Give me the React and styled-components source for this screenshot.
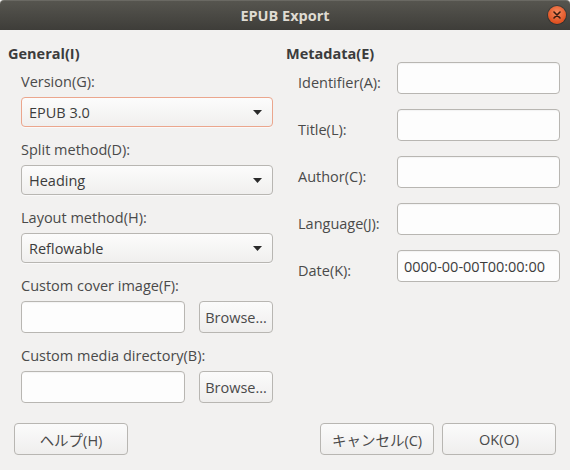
import React from "react";
import styled, { createGlobalStyle } from "styled-components";

const Global = createGlobalStyle`
  html, body { margin: 0; padding: 0; background: #f2f1f0; }
  body { font-family: "Open Sans", "Noto Sans CJK JP", sans-serif; font-size: 14.5px; color: #4a4a4a; }
  * { box-sizing: border-box; }
`;

const Window = styled.div`
  width: 570px;
  height: 470px;
  display: flex;
  flex-direction: column;
  background: #f2f1f0;
  overflow: hidden;
`;

const TitleBar = styled.div`
  position: relative;
  height: 30px;
  flex: none;
  display: flex;
  align-items: center;
  justify-content: center;
  background: linear-gradient(#56554f, #3e3d39);
  border-top: 1px solid #6a6963;
  border-radius: 4px 4px 0 0;
`;

const Title = styled.div`
  font-family: "Open Sans", sans-serif;
  font-weight: 700;
  font-size: 14.5px;
  color: #dfdbd2;
`;

const CloseBtn = styled.div`
  position: absolute;
  right: 4px;
  top: 5px;
  width: 18px;
  height: 18px;
  border-radius: 50%;
  background: radial-gradient(circle at 50% 35%, #f58a5f, #e05222 70%, #c9431a);
  box-shadow: 0 0 0 1px rgba(0,0,0,0.25);
  display: flex;
  align-items: center;
  justify-content: center;
`;

const Body = styled.div`
  flex: 1;
  display: flex;
  flex-direction: column;
  padding: 15px 14px 15px 8px;
`;

const Columns = styled.div`
  display: grid;
  grid-template-columns: 265px 274px;
  column-gap: 13px;
`;

const Column = styled.div`
  display: flex;
  flex-direction: column;
`;

const Heading = styled.div`
  font-weight: 700;
  line-height: 17px;
  color: #3c3c3c;
`;

const FieldList = styled.div`
  display: flex;
  flex-direction: column;
  gap: 14px;
  margin: 11px 0 0 13px;
`;

const Field = styled.div`
  display: flex;
  flex-direction: column;
  gap: 7px;
`;

const Label = styled.div`
  line-height: 17px;
  white-space: nowrap;
`;

const Combo = styled.div`
  height: 30px;
  display: flex;
  align-items: center;
  justify-content: space-between;
  padding: 0 10px 0 7px;
  border-radius: 4px;
  border: 1px solid ${(p) => (p.$focused ? "#eba68d" : "#b8b6b2")};
  background: linear-gradient(#fcfcfc, #f0efee);
  box-shadow: 0 1px 0 rgba(255,255,255,0.6);
  color: #3c3c3c;
`;

const Entry = styled.div`
  height: 32px;
  flex: ${(p) => (p.$grow ? 1 : "none")};
  display: flex;
  align-items: center;
  padding: 0 6px;
  border-radius: 4px;
  border: 1px solid #b8b6b2;
  background: #fdfdfd;
  box-shadow: inset 0 1px 1px rgba(0,0,0,0.04);
  color: #3c3c3c;
  white-space: nowrap;
`;

const EntryRow = styled.div`
  display: flex;
  gap: 14px;
`;

const Button = styled.div`
  height: 32px;
  width: ${(p) => p.$w}px;
  flex: none;
  display: flex;
  align-items: center;
  justify-content: center;
  border-radius: 4px;
  border: 1px solid #b8b6b2;
  background: linear-gradient(#fbfbfb, #efeeed);
  color: #4a4a4a;
  white-space: nowrap;
`;

const MetaList = styled.div`
  display: flex;
  flex-direction: column;
  gap: 15px;
`;

const MetaRow = styled.div`
  display: grid;
  grid-template-columns: 99px 163px;
  margin-left: 12px;
  align-items: center;
  height: 32px;
`;

const MetaLabel = styled.div`
  line-height: 17px;
  padding-top: 8px;
  white-space: nowrap;
`;

const ButtonBar = styled.div`
  margin-top: 20px;
  margin-left: 6px;
  display: flex;
  justify-content: space-between;
`;

const ButtonGroup = styled.div`
  display: flex;
  gap: 8px;
`;

const Arrow = () => (
  <svg width="9" height="5" viewBox="0 0 9 5">
    <path d="M0 0 H9 L4.5 5 Z" fill="#2a2a2a" />
  </svg>
);

const CloseX = () => (
  <svg width="8" height="8" viewBox="0 0 8 8">
    <path d="M1 1 L7 7 M7 1 L1 7" stroke="#3a1c10" strokeWidth="1.6" strokeLinecap="round" />
  </svg>
);

const combos = [
  { label: "Version(G):", value: "EPUB 3.0", focused: true },
  { label: "Split method(D):", value: "Heading" },
  { label: "Layout method(H):", value: "Reflowable" },
];

const pickers = ["Custom cover image(F):", "Custom media directory(B):"];

const meta = [
  { label: "Identifier(A):", value: "" },
  { label: "Title(L):", value: "" },
  { label: "Author(C):", value: "" },
  { label: "Language(J):", value: "" },
  { label: "Date(K):", value: "0000-00-00T00:00:00" },
];

export default function App() {
  return (
    <>
      <Global />
      <Window>
        <TitleBar>
          <Title>EPUB Export</Title>
          <CloseBtn>
            <CloseX />
          </CloseBtn>
        </TitleBar>
        <Body>
          <Columns>
            <Column>
              <Heading>General(I)</Heading>
              <FieldList>
                {combos.map((c) => (
                  <Field key={c.label}>
                    <Label>{c.label}</Label>
                    <Combo $focused={c.focused}>
                      <span>{c.value}</span>
                      <Arrow />
                    </Combo>
                  </Field>
                ))}
                {pickers.map((p) => (
                  <Field key={p}>
                    <Label>{p}</Label>
                    <EntryRow>
                      <Entry $grow />
                      <Button $w={74}>Browse...</Button>
                    </EntryRow>
                  </Field>
                ))}
              </FieldList>
            </Column>
            <Column>
              <Heading>Metadata(E)</Heading>
              <MetaList>
                {meta.map((m) => (
                  <MetaRow key={m.label}>
                    <MetaLabel>{m.label}</MetaLabel>
                    <Entry>{m.value}</Entry>
                  </MetaRow>
                ))}
              </MetaList>
            </Column>
          </Columns>
          <ButtonBar>
            <Button $w={114}>ヘルプ(H)</Button>
            <ButtonGroup>
              <Button $w={114}>キャンセル(C)</Button>
              <Button $w={114}>OK(O)</Button>
            </ButtonGroup>
          </ButtonBar>
        </Body>
      </Window>
    </>
  );
}
